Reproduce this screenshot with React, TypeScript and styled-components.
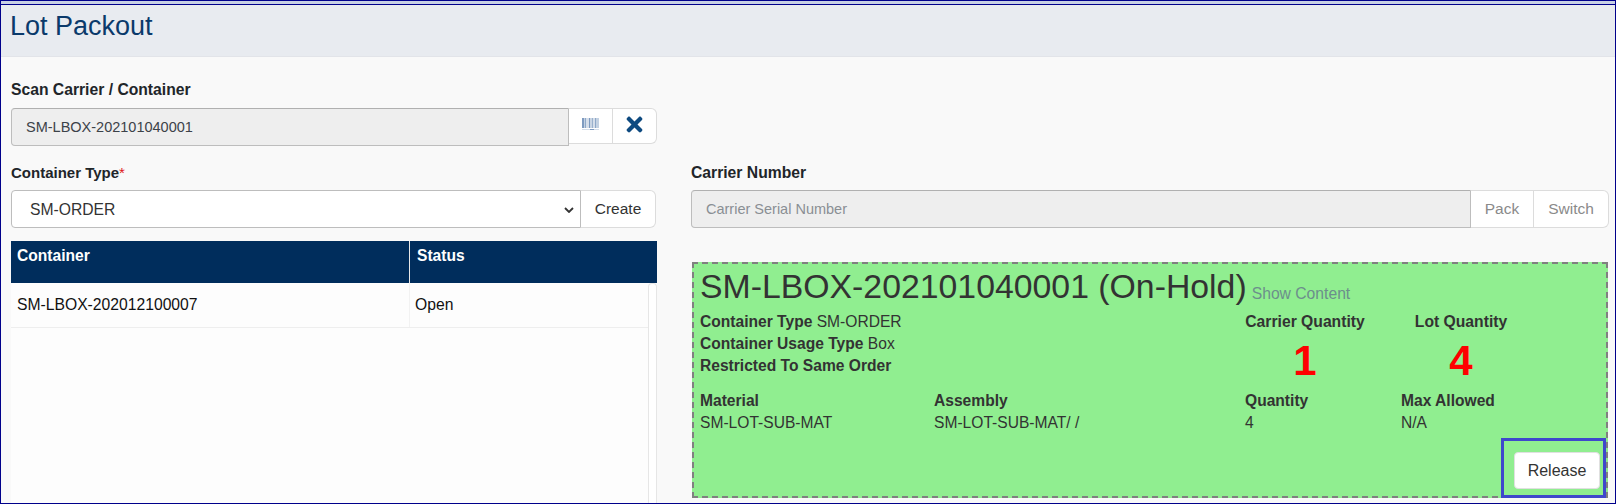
import { FaTimes } from "react-icons/fa";
import styled, { createGlobalStyle } from "styled-components";

const GlobalStyle = createGlobalStyle`
  html, body {
    margin: 0;
    padding: 0;
    background: #f9f9f9;
    overflow: hidden;
  }
  * {
    box-sizing: border-box;
  }
  body, input, select, button {
    font-family: "Liberation Sans", Arial, sans-serif;
  }
`;

function BarcodeIcon() {
  const bars = [
    [0, 2, "#7f9bc0"],
    [2, 1, "#c3d1e2"],
    [3, 1, "#8ea8c8"],
    [4, 3, "#d5deea"],
    [7, 1, "#7f9bc0"],
    [8, 2, "#c9d5e4"],
    [10, 1, "#9ab1cd"],
    [11, 2, "#d5deea"],
    [13, 1, "#8ea8c8"],
    [14, 3, "#c3d1e2"],
  ] as const;
  return (
    <BarcodeSvg width="17" height="12" viewBox="0 0 17 12">
      {bars.map(([x, w, fill]) => (
        <rect key={x} x={x} y="0" width={w} height="10" fill={fill} />
      ))}
      <rect x="0" y="11" width="17" height="1" fill="#d5deea" />
      <rect x="8" y="11" width="4" height="1" fill="#7f9bc0" />
    </BarcodeSvg>
  );
}

export default function App() {
  return (
    <>
      <GlobalStyle />
      <Frame>
        <TopStrip />
        <PageHeader>
          <PageTitle>Lot Packout</PageTitle>
        </PageHeader>
        <Main>
          <ScanField>
            <Label>Scan Carrier / Container</Label>
            <InputGroup>
              <TextInput readOnly value="SM-LBOX-202101040001" />
              <AddonButton $width={44} $height={36}>
                <BarcodeIcon />
              </AddonButton>
              <AddonButton $width={44} $height={36} $last>
                <ClearIcon size={23} color="#0e4a80" />
              </AddonButton>
            </InputGroup>
          </ScanField>
          <Columns>
            <LeftColumn>
              <Label $size={15}>
                Container Type<Required>*</Required>
              </Label>
              <SelectGroup>
                <SelectWrap>
                  <TypeSelect defaultValue="SM-ORDER">
                    <option>SM-ORDER</option>
                  </TypeSelect>
                  <SelectChevron width="10" height="6" viewBox="0 0 10 6">
                    <path d="M1 1l4 4 4-4" fill="none" stroke="#333" strokeWidth="1.8" />
                  </SelectChevron>
                </SelectWrap>
                <AddonButton $width={75} $height={38} $last>
                  Create
                </AddonButton>
              </SelectGroup>
              <ContainerTable>
                <TableHead>
                  <HeadCell $width={399}>Container</HeadCell>
                  <HeadCell $inset={7}>Status</HeadCell>
                </TableHead>
                <TableBody>
                  <TableRows>
                    <TableRow>
                      <BodyCell $width={399}>SM-LBOX-202012100007</BodyCell>
                      <BodyCell $inset={5}>Open</BodyCell>
                    </TableRow>
                  </TableRows>
                  <ScrollTrack />
                </TableBody>
              </ContainerTable>
            </LeftColumn>
            <RightColumn>
              <Label>Carrier Number</Label>
              <InputGroup>
                <TextInput disabled placeholder="Carrier Serial Number" />
                <AddonButton $width={63} $height={38} $muted>
                  Pack
                </AddonButton>
                <AddonButton $width={75} $height={38} $muted $last>
                  Switch
                </AddonButton>
              </InputGroup>
              <CarrierPanel>
                <PanelTitleRow>
                  <PanelTitle>SM-LBOX-202101040001 (On-Hold)</PanelTitle>
                  <ShowContent>Show Content</ShowContent>
                </PanelTitleRow>
                <SummaryGrid>
                  <SummaryInfo>
                    <InfoLine>
                      <strong>Container Type</strong> SM-ORDER
                    </InfoLine>
                    <InfoLine>
                      <strong>Container Usage Type</strong> Box
                    </InfoLine>
                    <InfoLine>
                      <strong>Restricted To Same Order</strong>
                    </InfoLine>
                  </SummaryInfo>
                  <Stat>
                    <strong>Carrier Quantity</strong>
                    <StatValue>1</StatValue>
                  </Stat>
                  <Stat>
                    <strong>Lot Quantity</strong>
                    <StatValue>4</StatValue>
                  </Stat>
                </SummaryGrid>
                <DetailGrid>
                  <InfoLine>
                    <strong>Material</strong>
                  </InfoLine>
                  <InfoLine>
                    <strong>Assembly</strong>
                  </InfoLine>
                  <InfoLine>
                    <strong>Quantity</strong>
                  </InfoLine>
                  <InfoLine>
                    <strong>Max Allowed</strong>
                  </InfoLine>
                  <InfoLine>SM-LOT-SUB-MAT</InfoLine>
                  <InfoLine>SM-LOT-SUB-MAT/ /</InfoLine>
                  <InfoLine>4</InfoLine>
                  <InfoLine>N/A</InfoLine>
                </DetailGrid>
                <PanelActions>
                  <ReleaseButton>Release</ReleaseButton>
                </PanelActions>
                <Highlight />
              </CarrierPanel>
            </RightColumn>
          </Columns>
        </Main>
      </Frame>
    </>
  );
}

const Frame = styled.div`
  width: 1616px;
  height: 504px;
  border: 1px solid #00008b;
  overflow: hidden;
  background: #f9f9f9;
`;
const TopStrip = styled.div`
  height: 4px;
  background: #c8d0e4;
  border-bottom: 1px solid #00008b;
`;
const PageHeader = styled.div`
  height: 52px;
  padding: 6px 0 0 9px;
  background: #e8ebf0;
  border-bottom: 1px solid #e2e4e9;
`;
const PageTitle = styled.h1`
  margin: 0;
  font-size: 27px;
  line-height: 30px;
  font-weight: 400;
  color: #0b3a6b;
`;
const Main = styled.div`
  padding: 24px 6px 0 10px;
`;
const ScanField = styled.div`
  width: 646px;
`;
const Label = styled.div<{ $size?: number }>`
  height: 27px;
  font-size: ${(p) => p.$size ?? 15.7}px;
  line-height: 18px;
  font-weight: 700;
  color: #212529;
`;
const Required = styled.span`
  color: #e01818;
  font-weight: 400;
`;
const InputGroup = styled.div`
  display: flex;
  height: 38px;
`;
const SelectGroup = styled(InputGroup)`
  width: 645px;
`;
const TextInput = styled.input`
  flex: 1;
  min-width: 0;
  height: 38px;
  padding: 0 14px;
  font-size: 14.5px;
  color: #3c4248;
  background: #eeeeee;
  border: 1px solid #bdbdbd;
  border-top-color: #b0b0b0;
  border-radius: 4px 0 0 4px;
  outline: none;
  &::placeholder {
    color: #8a8f94;
    opacity: 1;
  }
`;
const SelectWrap = styled.div`
  position: relative;
  flex: 1;
  min-width: 0;
`;
const TypeSelect = styled.select`
  width: 100%;
  height: 38px;
  padding: 0 0 0 18px;
  font-size: 15.7px;
  color: #333;
  background: #fff;
  border: 1px solid #bdbdbd;
  border-radius: 4px 0 0 4px;
  outline: none;
  appearance: none;
`;
const SelectChevron = styled.svg`
  position: absolute;
  top: 17px;
  right: 7px;
  pointer-events: none;
`;
const BarcodeSvg = styled.svg`
  margin-bottom: 4px;
`;
const ClearIcon = styled(FaTimes)`
  margin-bottom: 4px;
`;
const AddonButton = styled.button<{ $width: number; $height: number; $last?: boolean; $muted?: boolean }>`
  display: flex;
  align-items: center;
  justify-content: center;
  width: ${(p) => p.$width}px;
  height: ${(p) => p.$height}px;
  padding: 0;
  font-size: 15.5px;
  color: ${(p) => (p.$muted ? "#8a8a8a" : "#333")};
  background: #fff;
  border: 1px solid #dcdcdc;
  border-left: none;
  border-radius: ${(p) => (p.$last ? "0 6px 6px 0" : "0")};
`;
const Columns = styled.div`
  display: flex;
  margin-top: 18px;
  ${Label} {
    height: 26px;
  }
`;
const LeftColumn = styled.div`
  width: 646px;
  margin-right: 34px;
`;
const RightColumn = styled.div`
  flex: 1;
  min-width: 0;
`;
const ContainerTable = styled.div`
  margin-top: 13px;
`;
const TableHead = styled.div`
  display: flex;
  height: 42px;
  background: #002d5c;
`;
const HeadCell = styled.div<{ $width?: number; $inset?: number }>`
  ${(p) => (p.$width ? `width: ${p.$width}px; border-right: 1px solid #e8e8e8;` : "flex: 1;")}
  padding: 6px 0 0 ${(p) => p.$inset ?? 6}px;
  font-size: 15.6px;
  line-height: 18px;
  font-weight: 700;
  color: #fff;
`;
const TableBody = styled.div`
  display: flex;
  height: 230px;
  background: #fdfdfd;
`;
const TableRows = styled.div`
  flex: 1;
`;
const TableRow = styled.div`
  display: flex;
  height: 45px;
  border-bottom: 1px solid #eeeeee;
`;
const BodyCell = styled.div<{ $width?: number; $inset?: number }>`
  ${(p) => (p.$width ? `width: ${p.$width}px; border-right: 1px solid #f2f2f2;` : "flex: 1;")}
  padding: 13px 0 0 ${(p) => p.$inset ?? 6}px;
  font-size: 15.7px;
  line-height: 18px;
  color: #111;
`;
const ScrollTrack = styled.div`
  width: 9px;
  background: #fff;
  border: 1px solid #e6e6e6;
  border-bottom: none;
  border-radius: 4px 4px 0 0;
`;
const CarrierPanel = styled.div`
  position: relative;
  display: flex;
  flex-direction: column;
  margin: 34px 0 0 1px;
  width: 916px;
  height: 236px;
  padding: 3px 6px 7px 6px;
  background: #90ee90;
  border: 2px dashed #808080;
  color: #333;
`;
const PanelTitleRow = styled.div`
  display: flex;
  align-items: baseline;
  gap: 5px;
  height: 44px;
`;
const PanelTitle = styled.span`
  font-size: 33.8px;
  line-height: 38px;
`;
const ShowContent = styled.span`
  position: relative;
  top: 1px;
  font-size: 15.7px;
  color: #6c8f8c;
`;
const SummaryGrid = styled.div`
  display: grid;
  grid-template-columns: 545px 156px 120px;
  height: 79px;
`;
const SummaryInfo = styled.div`
  display: flex;
  flex-direction: column;
`;
const InfoLine = styled.div`
  height: 22px;
  font-size: 15.6px;
  line-height: 22px;
`;
const Stat = styled.div`
  width: 120px;
  font-size: 15.7px;
  line-height: 22px;
  text-align: center;
`;
const StatValue = styled.div`
  margin-top: 5px;
  font-size: 42px;
  line-height: 46px;
  font-weight: 700;
  color: #ff0000;
`;
const DetailGrid = styled.div`
  display: grid;
  grid-template-columns: 234px 311px 156px 1fr;
`;
const PanelActions = styled.div`
  display: flex;
  justify-content: flex-end;
  margin-top: auto;
`;
const ReleaseButton = styled.button`
  width: 86px;
  height: 37px;
  padding: 0;
  font-size: 16px;
  color: #333;
  background: #fff;
  border: 1px solid #e0e0e0;
  border-radius: 4px;
`;
const Highlight = styled.div`
  position: absolute;
  right: 0;
  bottom: -2px;
  width: 105px;
  height: 60px;
  border: 3px solid #3f48cc;
  pointer-events: none;
`;
